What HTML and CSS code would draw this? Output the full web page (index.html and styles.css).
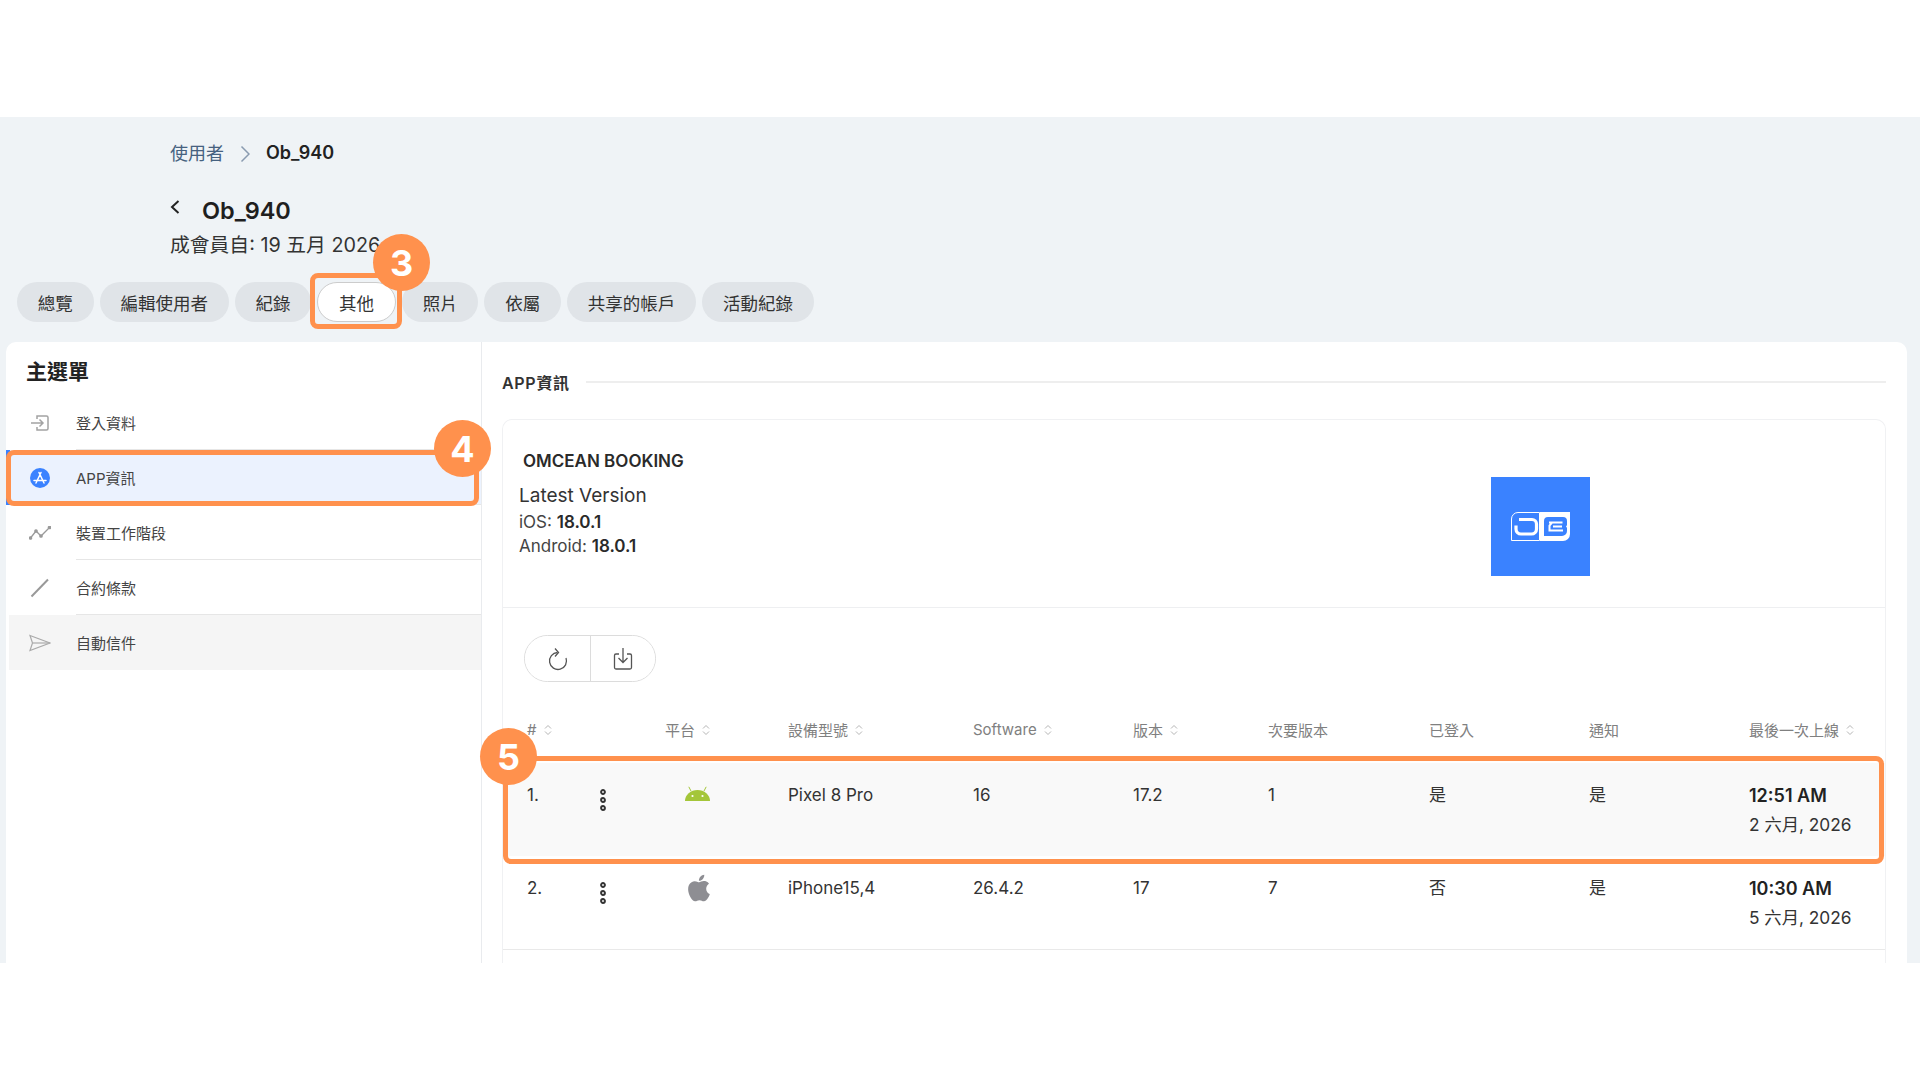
FILE: index.html
```html
<!DOCTYPE html>
<html lang="zh-Hant">
<head>
  <meta charset="UTF-8">
  <title>Ob_940</title>
  <link rel="stylesheet" href="styles.css">
</head>
<body>
  <div class="top-space"></div>

  <div class="page">
    <div class="head">
      <div class="breadcrumb">
        <span class="crumb-link">使用者</span>
        <svg class="crumb-sep" width="10" height="18" viewBox="0 0 10 18"><path d="M1.500 1.500 9 9l-7.500 7.500" fill="none" stroke="#8a9bb0" stroke-width="1.500"/></svg>
        <span class="crumb-current">Ob_940</span>
      </div>
      <div class="title-row">
        <svg class="back" width="10" height="14" viewBox="0 0 10 14"><path d="M8.500 1 2 7l6.500 6" fill="none" stroke="#222" stroke-width="2"/></svg>
        <h1>Ob_940</h1>
      </div>
      <div class="member-since">成會員自: 19 五月 2026</div>
    </div>

    <div class="tabs">
      <span class="tab">總覽</span>
      <span class="tab">編輯使用者</span>
      <span class="tab">紀錄</span>
      <span class="tab active">其他</span>
      <span class="tab">照片</span>
      <span class="tab">依屬</span>
      <span class="tab">共享的帳戶</span>
      <span class="tab">活動紀錄</span>
    </div>

    <div class="panel">
      <aside class="sidebar">
        <h2>主選單</h2>
        <div class="menu-item">
          <svg class="menu-icon" width="20" height="20" viewBox="0 0 20 20" fill="none" stroke="#a3a3a3" stroke-width="1.500"><path d="M7 6V3h9.500a1.500 1.500 0 0 1 1.500 1.500v11a1.500 1.500 0 0 1-1.500 1.500H7v-3"/><path d="M1 10h12M9.500 6.500 13 10l-3.500 3.500"/></svg>
          <span>登入資料</span>
        </div>
        <div class="menu-item selected">
          <svg class="menu-icon" width="20" height="20" viewBox="0 0 20 20"><circle cx="10" cy="10" r="10" fill="#3a82ff"/><path d="M11 4.500 6 15M9 4.500 14 15M4 12.500h12" fill="none" stroke="#fff" stroke-width="1.500" stroke-linecap="round"/></svg>
          <span>APP資訊</span>
        </div>
        <div class="menu-item">
          <svg class="menu-icon" width="22" height="14" viewBox="0 0 22 14" fill="none" stroke="#9a9a9a" stroke-width="1.300"><path d="M1.500 12 7 5l5 5 8.500-8.500"/><circle cx="1.500" cy="12" r="1.200" fill="#9a9a9a"/><circle cx="7" cy="5" r="1.200" fill="#9a9a9a"/><circle cx="12" cy="10" r="1.200" fill="#9a9a9a"/><circle cx="20.500" cy="1.500" r="1.200" fill="#9a9a9a"/></svg>
          <span>裝置工作階段</span>
        </div>
        <div class="menu-item">
          <svg class="menu-icon" width="20" height="20" viewBox="0 0 20 20"><path d="M1.500 18.500 18 1.500" fill="none" stroke="#999" stroke-width="2"/></svg>
          <span>合約條款</span>
        </div>
        <div class="menu-item hovered">
          <svg class="menu-icon" width="22" height="18" viewBox="0 0 22 18" fill="none" stroke="#aaa" stroke-width="1.200"><path d="M1 1.500 21 9 1 16.500 3.500 9z"/><path d="M3.500 9H21"/></svg>
          <span>自動信件</span>
        </div>
      </aside>

      <main class="content">
        <div class="section-title">
          <span>APP資訊</span>
          <div class="section-line"></div>
        </div>

        <div class="app-card">
          <div class="app-info">
            <div class="app-text">
              <div class="app-name">OMCEAN BOOKING</div>
              <div class="latest">Latest Version</div>
              <div class="version-line">iOS: <b>18.0.1</b></div>
              <div class="version-line">Android: <b>18.0.1</b></div>
            </div>
            <div class="app-logo">
              <svg width="59" height="29" viewBox="0 0 59 29">
                <path d="M28.500.5H7A6.500 6.500 0 0 0 .5 7v21.500h28z" fill="none" stroke="#fff"/>
                <path d="M29 0h30v22a7 7 0 0 1-7 7H29z" fill="#fff"/>
                <path d="M8 7.500h13a4.500 4.500 0 0 1 4.500 4.500v5a5 5 0 0 1-5 5H10a5 5 0 0 1-5-5v-3.500" fill="none" stroke="#fff" stroke-width="3.200"/>
                <path d="M33 9a4 4 0 0 1 4-4h15a4 4 0 0 1 4 4v4a3 3 0 0 1-1 1.500 3 3 0 0 1 1 1.500v3a5 5 0 0 1-5 5H33z" fill="#3a82ff"/>
                <path d="M38 10.500h13.500M41 10.500l-2.500 3v5H52M42 14.500h9" fill="none" stroke="#fff" stroke-width="2"/>
              </svg>
            </div>
          </div>

          <div class="toolbar">
            <div class="btn-group">
              <button class="icon-btn">
                <svg width="22" height="24" viewBox="0 0 22 24" fill="none" stroke="#555" stroke-width="1.300"><path d="M19 11a8.500 8.500 0 1 1-8.500-5.500"/><path d="M8 1.500l3.500 4-3.500 4"/></svg>
              </button>
              <button class="icon-btn">
                <svg width="20" height="24" viewBox="0 0 20 24" fill="none" stroke="#555" stroke-width="1.300"><path d="M6 7H3a1.500 1.500 0 0 0-1.500 1.500v12A1.500 1.500 0 0 0 3 22h14a1.500 1.500 0 0 0 1.500-1.500v-12A1.500 1.500 0 0 0 17 7h-3"/><path d="M10 1v14M5.500 11l4.500 4.500 4.500-4.500"/></svg>
              </button>
            </div>
          </div>

          <table class="devices">
            <colgroup>
              <col class="col-num"><col class="col-menu"><col class="col-platform"><col class="col-model"><col class="col-software">
              <col class="col-version"><col class="col-minor"><col class="col-login"><col class="col-notify"><col class="col-last">
            </colgroup>
            <thead>
              <tr>
                <th class="first"><span class="sortable"># <svg class="sort" width="8" height="12" viewBox="0 0 8 12"><path d="M1 4.500 4 1.500l3 3M1 7.500l3 3 3-3" fill="none" stroke="#b5b5b5" stroke-width="1"/></svg></span></th>
                <th></th>
                <th><span class="sortable">平台 <svg class="sort" width="8" height="12" viewBox="0 0 8 12"><path d="M1 4.500 4 1.500l3 3M1 7.500l3 3 3-3" fill="none" stroke="#b5b5b5" stroke-width="1"/></svg></span></th>
                <th><span class="sortable">設備型號 <svg class="sort" width="8" height="12" viewBox="0 0 8 12"><path d="M1 4.500 4 1.500l3 3M1 7.500l3 3 3-3" fill="none" stroke="#b5b5b5" stroke-width="1"/></svg></span></th>
                <th><span class="sortable">Software <svg class="sort" width="8" height="12" viewBox="0 0 8 12"><path d="M1 4.500 4 1.500l3 3M1 7.500l3 3 3-3" fill="none" stroke="#b5b5b5" stroke-width="1"/></svg></span></th>
                <th><span class="sortable">版本 <svg class="sort" width="8" height="12" viewBox="0 0 8 12"><path d="M1 4.500 4 1.500l3 3M1 7.500l3 3 3-3" fill="none" stroke="#b5b5b5" stroke-width="1"/></svg></span></th>
                <th>次要版本</th>
                <th>已登入</th>
                <th>通知</th>
                <th><span class="sortable">最後一次上線 <svg class="sort" width="8" height="12" viewBox="0 0 8 12"><path d="M1 4.500 4 1.500l3 3M1 7.500l3 3 3-3" fill="none" stroke="#b5b5b5" stroke-width="1"/></svg></span></th>
              </tr>
            </thead>
            <tbody>
              <tr class="row-active">
                <td class="first">1.</td>
                <td><svg class="dots" width="8" height="22" viewBox="0 0 8 22" fill="#ddd" stroke="#333" stroke-width="1.800"><circle cx="4" cy="3" r="2"/><circle cx="4" cy="11" r="2"/><circle cx="4" cy="19" r="2"/></svg></td>
                <td>
                  <svg class="platform android" width="25" height="15" viewBox="0 0 25 15"><path d="M0 15a12.500 11 0 0 1 25 0z" fill="#a4c639"/><path d="M6 5 3.800.8M19 5 21.200.8" stroke="#a4c639" stroke-width="1"/><circle cx="7.500" cy="10" r="1.100" fill="#fff"/><circle cx="17.500" cy="10" r="1.100" fill="#fff"/></svg>
                </td>
                <td>Pixel 8 Pro</td>
                <td>16</td>
                <td>17.2</td>
                <td>1</td>
                <td>是</td>
                <td>是</td>
                <td class="last-seen"><b>12:51 AM</b><br>2 六月, 2026</td>
              </tr>
              <tr>
                <td class="first">2.</td>
                <td><svg class="dots" width="8" height="22" viewBox="0 0 8 22" fill="#ddd" stroke="#333" stroke-width="1.800"><circle cx="4" cy="3" r="2"/><circle cx="4" cy="11" r="2"/><circle cx="4" cy="19" r="2"/></svg></td>
                <td>
                  <svg class="platform apple" width="32" height="32" viewBox="0 0 24 24"><path d="M18.710 19.500c-.83 1.240-1.710 2.450-3.050 2.470-1.340.03-1.770-.79-3.290-.79-1.530 0-2 .77-3.270.82-1.310.05-2.300-1.320-3.140-2.530C4.250 17 2.940 12.450 4.700 9.390c.87-1.520 2.430-2.480 4.120-2.510 1.280-.02 2.500.87 3.290.87.78 0 2.260-1.070 3.810-.91.65.03 2.470.26 3.640 1.980-.09.06-2.170 1.280-2.150 3.810.03 3.020 2.650 4.030 2.680 4.040-.03.07-.42 1.440-1.380 2.830M13 3.500c.73-.83 1.940-1.460 2.940-1.500.13 1.170-.34 2.350-1.040 3.190-.69.85-1.830 1.510-2.950 1.420-.15-1.150.41-2.350 1.050-3.110z" fill="#8e8e93"/></svg>
                </td>
                <td>iPhone15,4</td>
                <td>26.4.2</td>
                <td>17</td>
                <td>7</td>
                <td>否</td>
                <td>是</td>
                <td class="last-seen"><b>10:30 AM</b><br>5 六月, 2026</td>
              </tr>
            </tbody>
          </table>
        </div>
      </main>
    </div>

    <!-- tutorial annotations, sit on top of the page -->
    <div class="mark-box box-tab"></div>
    <div class="mark-box box-menu"></div>
    <div class="mark-box box-row"></div>
    <div class="badge badge-3">3</div>
    <div class="badge badge-4">4</div>
    <div class="badge badge-5">5</div>
  </div>
</body>
</html>
```

FILE: styles.css
```css
* {
  box-sizing: border-box;
}
body {
  margin: 0;
  background: #fff;
  color: #2b2b2b;
  font-family: Inter, "Noto Sans CJK TC", sans-serif;
}
.top-space {
  height: 117px;
}
.page {
  position: relative;
  height: 846px;
  background: #eff3f6;
  overflow: hidden;
}

/* header */
.head {
  padding: 21px 0 0 170px;
}
.breadcrumb {
  display: flex;
  align-items: center;
  height: 28px;
  font-size: 18px;
}
.crumb-link {
  color: #46617f;
}
.crumb-sep {
  margin: 3px 16px 0 16px;
}
.crumb-current {
  font-weight: 600;
  color: #222;
}
.title-row {
  display: flex;
  align-items: center;
  height: 36px;
  margin-top: 26px;
}
.back {
  margin: -6px 22px 0 0;
}
h1 {
  margin: 0;
  font-size: 23.5px;
  font-weight: 600;
  color: #1f1f1f;
}
.member-since {
  margin-top: 2px;
  font-size: 19.8px;
  line-height: 30px;
  color: #333;
}

/* tabs */
.tabs {
  display: flex;
  gap: 6px;
  margin-top: 22px;
  padding-left: 17px;
}
.tab {
  display: flex;
  align-items: center;
  height: 40px;
  padding: 0 20.8px;
  border-radius: 20px;
  background: #e0e4e8;
  font-size: 17.5px;
  color: #333;
}
.tab.active {
  background: #fff;
  border: 1px solid #ccc;
}

/* panel */
.panel {
  display: flex;
  height: 640px;
  margin: 20px 13px 0 6px;
  background: #fff;
  border-radius: 10px 10px 0 0;
}
.sidebar {
  width: 476px;
  flex-shrink: 0;
  border-right: 1px solid #e9ebee;
}
.sidebar h2 {
  margin: 0;
  padding: 15px 0 0 20px;
  height: 53px;
  font-size: 21px;
  line-height: 30px;
  font-weight: 600;
  color: #222;
}
.menu-item {
  display: flex;
  align-items: center;
  position: relative;
  height: 55px;
  padding-left: 70px;
  font-size: 15px;
  color: #444;
}
.menu-item::after {
  content: "";
  position: absolute;
  left: 70px;
  right: 0;
  bottom: 0;
  height: 1px;
  background: #e6e6e6;
}
.menu-item.selected {
  background: #ebf2fe;
  border-left: 4px solid #3a82ff;
  padding-left: 66px;
}
.menu-item.hovered {
  background: #f5f5f5;
  margin-left: 3px;
  padding-left: 67px;
}
.menu-item.hovered::after {
  display: none;
}
.menu-icon {
  position: absolute;
  left: 34px;
  top: 50%;
  transform: translate(-50%, -50%);
}
.menu-item.selected .menu-icon {
  left: 30px;
}
.menu-item.hovered .menu-icon {
  left: 31px;
}

/* main column */
.content {
  flex: 1;
  padding: 26px 21px 0 20px;
}
.section-title {
  display: flex;
  align-items: center;
  gap: 16px;
  height: 28px;
  font-size: 16px;
  font-weight: 600;
  letter-spacing: 0.7px;
  color: #333;
}
.section-line {
  flex: 1;
  height: 2px;
  background: #eee;
}
.app-card {
  height: 560px;
  margin-top: 23px;
  border: 1px solid #f0f1f3;
  border-bottom: none;
  border-radius: 10px 10px 0 0;
}
.app-info {
  display: flex;
  height: 188px;
  border-bottom: 1px solid #eeeff1;
}
.app-text {
  width: 988px;
  padding: 29px 0 0 16px;
}
.app-name {
  padding-left: 4px;
  font-size: 17px;
  font-weight: 600;
  line-height: 24px;
  color: #2a2a2a;
}
.latest {
  margin-top: 9px;
  font-size: 19px;
  line-height: 28px;
  color: #333;
}
.version-line {
  font-size: 17px;
  line-height: 24px;
  color: #444;
}
.version-line b {
  font-weight: 600;
  color: #2a2a2a;
}
.app-logo {
  display: flex;
  align-items: center;
  justify-content: center;
  width: 99px;
  height: 99px;
  margin-top: 57px;
  background: #3a82ff;
}

.toolbar {
  padding: 27px 0 0 21px;
}
.btn-group {
  display: inline-flex;
  height: 47px;
  border: 1px solid #dcdcdc;
  border-radius: 24px;
  overflow: hidden;
}
.icon-btn {
  display: flex;
  align-items: center;
  justify-content: center;
  width: 65px;
  padding: 0;
  border: none;
  background: #fff;
}
.icon-btn + .icon-btn {
  border-left: 1px solid #dcdcdc;
}

/* device table */
.devices {
  width: 1382px;
  margin-top: 14px;
  table-layout: fixed;
  border-collapse: collapse;
}
.col-num { width: 100px; }
.col-menu { width: 62px; }
.col-platform { width: 123px; }
.col-model { width: 185px; }
.col-software { width: 160px; }
.col-version { width: 135px; }
.col-minor { width: 161px; }
.col-login { width: 160px; }
.col-notify { width: 160px; }
.col-last { width: 136px; }

.devices th {
  height: 67px;
  padding: 0;
  text-align: left;
  vertical-align: middle;
  font-size: 15px;
  font-weight: 400;
  color: #808080;
  white-space: nowrap;
}
.sortable {
  display: inline-flex;
  align-items: center;
  gap: 4px;
}
.sort {
  margin-left: 3px;
}
.devices td {
  height: 93px;
  padding: 18px 0 0;
  vertical-align: top;
  font-size: 17px;
  line-height: 29px;
  color: #333;
  border-bottom: 1px solid #e9e9e9;
}
.devices .first {
  padding-left: 24px;
}
.devices td.last-seen {
  font-size: 17.3px;
}
.devices td b {
  font-size: 18px;
  font-weight: 600;
  color: #222;
}
.row-active td {
  background: #f9f9f9;
  border-bottom: none;
}
.dots {
  display: block;
  margin: 8px 0 0 -4px;
}
.platform {
  display: block;
}
.android {
  margin: 5px 0 0 20px;
}
.apple {
  margin: -2px 0 0 18px;
}

/* annotations */
.mark-box {
  position: absolute;
  border: 5px solid #ff914d;
  border-radius: 8px;
  pointer-events: none;
}
.box-tab {
  left: 310px;
  top: 156px;
  width: 92px;
  height: 56px;
}
.box-menu {
  left: 6px;
  top: 333px;
  width: 473px;
  height: 56px;
}
.box-row {
  left: 503px;
  top: 639px;
  width: 1381px;
  height: 108px;
}
.badge {
  position: absolute;
  display: flex;
  align-items: center;
  justify-content: center;
  width: 57px;
  height: 57px;
  border-radius: 50%;
  background: #ff914d;
  color: #fff;
  font-size: 36px;
  font-weight: 700;
}
.badge-3 {
  left: 373px;
  top: 117px;
}
.badge-4 {
  left: 434px;
  top: 303px;
}
.badge-5 {
  left: 480px;
  top: 611px;
}
```
